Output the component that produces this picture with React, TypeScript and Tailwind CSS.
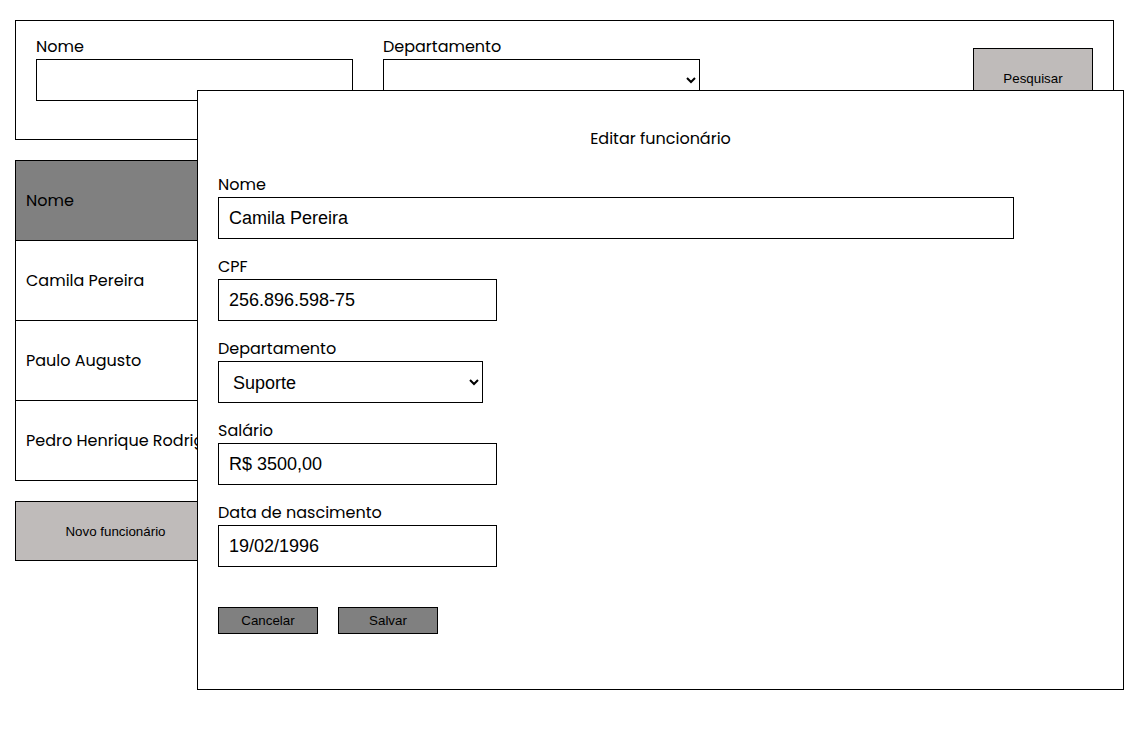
import React from 'react';

const label = "block text-[16px] leading-[24px] text-black font-['Poppins','Open_Sans',sans-serif]";
const input = "block h-[42px] border border-black bg-white px-[10px] text-[18px] text-black font-['Liberation_Sans',Arial,sans-serif] outline-none";
const btn = "border border-black text-[13.333px] text-black font-['Liberation_Sans',Arial,sans-serif]";

const Field: React.FC<{ title: string; width: string; value: string }> = ({ title, width, value }) => (
  <div className="mb-[16px]">
    <span className={label}>{title}</span>
    <input className={`${input} ${width}`} defaultValue={value} />
  </div>
);

const rows = ['Camila Pereira', 'Paulo Augusto', 'Pedro Henrique Rodrigues'];

export default function App() {
  return (
    <div className="relative min-h-[736px] w-[1137px] bg-white px-[15px] pt-[20px]">
      {/* filtro */}
      <div className="flex h-[120px] w-[1099px] items-start border border-black pl-[20px] pr-[20px] pt-[14px]">
        <div>
          <span className={label}>Nome</span>
          <input className={`${input} w-[317px]`} />
        </div>
        <div className="ml-[30px]">
          <span className={label}>Departamento</span>
          <select className={`${input} w-[317px] px-[4px]`}>
            <option></option>
          </select>
        </div>
        <button className={`${btn} ml-auto mt-[13px] h-[60px] w-[120px] bg-[#bfbbba] pt-[2px]`}>
          Pesquisar
        </button>
      </div>

      {/* tabela */}
      <div className="mt-[20px] w-[1099px] border border-black font-['Poppins','Open_Sans',sans-serif] text-[16px] text-black">
        <div className="flex h-[79px] items-center bg-[#808080] px-[10px]">Nome</div>
        {rows.map((r) => (
          <div key={r} className="flex h-[80px] items-center border-t border-black px-[10px]">
            {r}
          </div>
        ))}
      </div>

      <button className={`${btn} mt-[20px] h-[60px] w-[201px] bg-[#bfbbba] pt-[2px]`}>
        Novo funcionário
      </button>

      {/* modal */}
      <div className="absolute left-[197px] top-[90px] h-[600px] w-[927px] border border-black bg-white px-[20px] pt-[38px]">
        <h2 className="text-center text-[16px] leading-[20px] text-black font-['Poppins','Open_Sans',sans-serif]">
          Editar funcionário
        </h2>
        <div className="mt-[24px]">
          <Field title="Nome" width="w-[796px]" value="Camila Pereira" />
          <Field title="CPF" width="w-[279px]" value="256.896.598-75" />
          <div className="mb-[16px]">
            <span className={label}>Departamento</span>
            <select className={`${input} w-[265px] px-[10px] pt-[1px]`} defaultValue="Suporte">
              <option>Suporte</option>
              <option>Financeiro</option>
              <option>Vendas</option>
            </select>
          </div>
          <Field title="Salário" width="w-[279px]" value="R$ 3500,00" />
          <Field title="Data de nascimento" width="w-[279px]" value="19/02/1996" />
        </div>
        <div className="mt-[40px] flex gap-[20px]">
          <button className={`${btn} h-[27px] w-[100px] bg-[#808080]`}>Cancelar</button>
          <button className={`${btn} h-[27px] w-[100px] bg-[#808080]`}>Salvar</button>
        </div>
      </div>
    </div>
  );
}
